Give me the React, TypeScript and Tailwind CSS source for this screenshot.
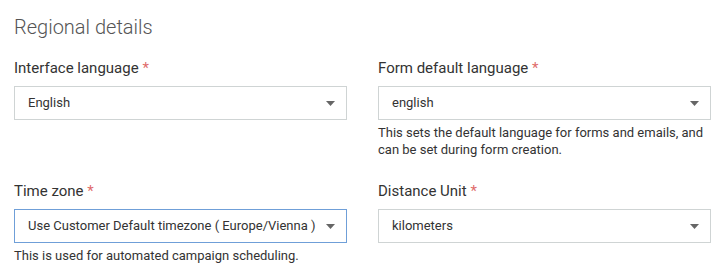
const fields = [
  {
    label: "Interface language",
    value: "English",
    help: "",
    focused: false,
  },
  {
    label: "Form default language",
    value: "english",
    help: "This sets the default language for forms and emails, and can be set during form creation.",
    focused: false,
  },
  {
    label: "Time zone",
    value: "Use Customer Default timezone ( Europe/Vienna )",
    help: "This is used for automated campaign scheduling.",
    focused: true,
  },
  {
    label: "Distance Unit",
    value: "kilometers",
    help: "",
    focused: false,
  },
];

function Caret() {
  return (
    <svg width="9" height="5" viewBox="0 0 9 5" className="shrink-0">
      <path d="M0 0h9L4.5 5z" fill="#666" />
    </svg>
  );
}

function SelectField({
  label,
  value,
  help,
  focused,
}: {
  label: string;
  value: string;
  help: string;
  focused: boolean;
}) {
  return (
    <div className="flex flex-col">
      <label className="text-[15px] leading-5 text-[#333]">
        {label} <span className="text-[#e06b6b]">*</span>
      </label>
      <div
        className={`mt-2 flex h-[34px] items-center justify-between border bg-white pl-[13px] pr-[11px] text-[13px] text-[#333] ${
          focused ? "border-[#6f9fd8]" : "border-[#cfd4d4]"
        }`}
      >
        <span className="whitespace-nowrap">{value}</span>
        <Caret />
      </div>
      {help && <p className="mt-1 text-[13px] leading-[17px] text-[#333]">{help}</p>}
    </div>
  );
}

export default function App() {
  return (
    <div className="min-h-[271px] bg-white pl-[14px] pr-[12px] pt-[15px] font-['Roboto',sans-serif]">
      <h2 className="text-[20px] font-light leading-6 text-[#555]">Regional details</h2>
      <div className="mt-[19px] grid grid-cols-2 gap-x-[31px] gap-y-[23px]">
        {fields.map((f) => (
          <SelectField key={f.label} {...f} />
        ))}
      </div>
    </div>
  );
}
